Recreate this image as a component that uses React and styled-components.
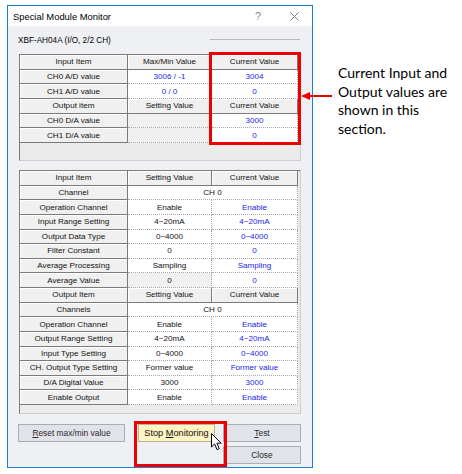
import React from 'react'
import styled, { createGlobalStyle } from 'styled-components'

const GlobalStyle = createGlobalStyle`
  html, body {
    margin: 0;
    padding: 0;
    background: #ffffff;
  }
  body {
    font-family: "Liberation Sans", Arial, sans-serif;
  }
`

const Page = styled.div`
  position: relative;
  width: 462px;
  height: 474px;
  display: flex;
  align-items: flex-start;
`

const Window = styled.div`
  position: relative;
  margin: 5px 0 0 7px;
  width: 306px;
  box-sizing: border-box;
  border: 1px solid #1a7fd4;
  background: #eff0f4;
`

const TitleBar = styled.div`
  height: 20px;
  display: flex;
  align-items: center;
  background: #ffffff;
  padding-left: 5px;
`

const Title = styled.div`
  flex: 1;
  font-size: 9.4px;
  color: #000;
`

const TitleButton = styled.div`
  width: 36px;
  height: 20px;
  display: flex;
  align-items: center;
  justify-content: center;
  color: #8a8a8a;
  font-size: 11px;
`

const Body = styled.div`
  padding: 8px 11px 3px 11px;
`

const SubRow = styled.div`
  height: 14px;
  display: flex;
  justify-content: space-between;
  margin-bottom: 6px;
`

const SubTitle = styled.div`
  margin-left: -1px;
  font-size: 8.2px;
  line-height: 14px;
  color: #000;
`

const Separator = styled.div`
  width: 90px;
  height: 1px;
  margin: 5px 1px 0 0;
  background: #b8b8b8;
`

const GridBox = styled.div`
  box-sizing: border-box;
  height: ${p => p.h}px;
  margin-bottom: ${p => p.gap || 0}px;
  border: 1px solid;
  border-color: #7c7c7c #cfcfcf #cfcfcf #7c7c7c;
  background: #ebebeb;
`

const Grid = styled.div`
  display: grid;
  grid-template-columns: 108px 84px 86px;
  grid-auto-rows: ${p => p.row}px;
`

const Head = styled.div`
  box-sizing: border-box;
  display: flex;
  align-items: center;
  justify-content: center;
  background: #f0f0f0;
  border-right: 1px solid #7a7a7a;
  border-bottom: 1px solid #7a7a7a;
  box-shadow: inset 1px 1px 0 #ffffff;
  font-size: 8.1px;
  color: #111;
  white-space: nowrap;
`

const Cell = styled.div`
  box-sizing: border-box;
  display: flex;
  align-items: center;
  justify-content: center;
  grid-column: span ${p => p.span || 1};
  background: ${p => (p.dim ? '#f0f0f0' : '#ffffff')};
  color: ${p => (p.live ? '#2424e8' : '#111')};
  border-right: 1px dotted #a9a9a9;
  border-bottom: 1px dotted #a9a9a9;
  font-size: 8.1px;
  white-space: nowrap;
`

const Buttons = styled.div`
  margin: 10px 0 0 -1px;
  display: grid;
  grid-template-columns: 107px 1fr 78px;
  grid-template-rows: 18px 18px;
  row-gap: 4px;
`

const Button = styled.button`
  box-sizing: border-box;
  height: 18px;
  padding: 0;
  border: 1px solid ${p => (p.hot ? '#b9b295' : '#a9abb5')};
  background: ${p => (p.hot ? '#fcf4c2' : '#e1e3ea')};
  font-family: "Liberation Sans", Arial, sans-serif;
  font-size: ${p => (p.hot ? '9.2px' : '8.4px')};
  color: ${p => (p.hot ? '#111' : '#2a2a2a')};
  width: ${p => (p.w ? p.w + 'px' : 'auto')};
  justify-self: ${p => (p.hot ? 'end' : 'stretch')};
  margin-right: ${p => (p.hot ? '8px' : '0')};
  grid-column: ${p => p.col || 'auto'};
  grid-row: ${p => p.rowPos || 'auto'};
`

const RedBox = styled.div`
  position: absolute;
  box-sizing: border-box;
  border: 3px solid #ee0000;
  pointer-events: none;
`

const Cursor = styled.svg`
  position: absolute;
  left: 203px;
  top: 427px;
`

const Note = styled.div`
  margin: 64px 0 0 25px;
  font-family: Lato, "Open Sans", sans-serif;
  font-size: 14px;
  line-height: 18.5px;
  color: #000;
`

const Arrow = styled.svg`
  position: absolute;
  left: 301px;
  top: 91px;
`

const ioRows = [
  { head: ['Input Item', 'Max/Min Value', 'Current Value'] },
  { label: 'CH0 A/D value', set: '3006 / -1', setLive: true, cur: '3004' },
  { label: 'CH1 A/D value', set: '0 / 0', setLive: true, cur: '0' },
  { head: ['Output item', 'Setting Value', 'Current Value'] },
  { label: 'CH0 D/A value', set: '', dim: true, cur: '3000' },
  { label: 'CH1 D/A value', set: '', dim: true, cur: '0' },
]

const chRows = [
  { head: ['Input Item', 'Setting Value', 'Current Value'] },
  { label: 'Channel', span: 'CH 0' },
  { label: 'Operation Channel', set: 'Enable', cur: 'Enable' },
  { label: 'Input Range Setting', set: '4~20mA', cur: '4~20mA' },
  { label: 'Output Data Type', set: '0~4000', cur: '0~4000' },
  { label: 'Filter Constant', set: '0', cur: '0' },
  { label: 'Average Processing', set: 'Sampling', cur: 'Sampling' },
  { label: 'Average Value', set: '0', dim: true, cur: '0' },
  { head: ['Output Item', 'Setting Value', 'Current Value'] },
  { label: 'Channels', span: 'CH 0' },
  { label: 'Operation Channel', set: 'Enable', cur: 'Enable' },
  { label: 'Output Range Setting', set: '4~20mA', cur: '4~20mA' },
  { label: 'Input Type Setting', set: '0~4000', cur: '0~4000' },
  { label: 'CH. Output Type Setting', set: 'Former value', cur: 'Former value' },
  { label: 'D/A Digital Value', set: '3000', cur: '3000' },
  { label: 'Enable Output', set: 'Enable', cur: 'Enable' },
]

const renderRows = rows =>
  rows.flatMap((r, i) => {
    if (r.head) {
      return r.head.map((h, j) => <Head key={i + '-' + j}>{h}</Head>)
    }
    if (r.span) {
      return [
        <Head key={i + '-l'}>{r.label}</Head>,
        <Cell key={i + '-s'} span={2} live={false}>{r.span}</Cell>,
      ]
    }
    return [
      <Head key={i + '-l'}>{r.label}</Head>,
      <Cell key={i + '-s'} dim={r.dim} live={!!r.setLive}>{r.set}</Cell>,
      <Cell key={i + '-c'} live>{r.cur}</Cell>,
    ]
  })

const App = () => {
  return (
    <Page>
      <GlobalStyle />
      <Window>
        <TitleBar>
          <Title>Special Module Monitor</Title>
          <TitleButton>?</TitleButton>
          <TitleButton>
            <svg width="9" height="9" viewBox="0 0 9 9">
              <path d="M0.5 0.5 L8.5 8.5 M8.5 0.5 L0.5 8.5" stroke="#7d7d7d" strokeWidth="1" />
            </svg>
          </TitleButton>
        </TitleBar>
        <Body>
          <SubRow>
            <SubTitle>XBF-AH04A (I/O, 2/2 CH)</SubTitle>
            <Separator />
          </SubRow>
          <GridBox h={107} gap={9}>
            <Grid row={14.67}>{renderRows(ioRows)}</Grid>
          </GridBox>
          <GridBox h={244}>
            <Grid row={14.625}>{renderRows(chRows)}</Grid>
          </GridBox>
          <Buttons>
            <Button><u>R</u>eset max/min value</Button>
            <Button hot w={77}>Stop <u>M</u>onitoring</Button>
            <Button><u>T</u>est</Button>
            <Button col={3} rowPos={2}>Close</Button>
          </Buttons>
        </Body>
        <RedBox style={{ left: 201, top: 46, width: 92, height: 93 }} />
        <RedBox style={{ left: 126, top: 415, width: 93, height: 46 }} />
        <Cursor width="12" height="18" viewBox="0 0 12 18">
          <path
            d="M0.5 0.5 L0.5 14 L3.6 11 L6 16.6 L8.2 15.6 L5.9 10.2 L10.2 10.2 Z"
            fill="#ffffff"
            stroke="#000000"
            strokeWidth="1"
            strokeLinejoin="round"
          />
        </Cursor>
      </Window>
      <Arrow width="32" height="10" viewBox="0 0 32 10">
        <line x1="8" y1="5" x2="31" y2="5" stroke="#e60000" strokeWidth="2" />
        <polygon points="0,5 9,1 9,9" fill="#e60000" />
      </Arrow>
      <Note>
        Current Input and<br />
        Output values are<br />
        shown in this<br />
        section.
      </Note>
    </Page>
  )
}

export default App
